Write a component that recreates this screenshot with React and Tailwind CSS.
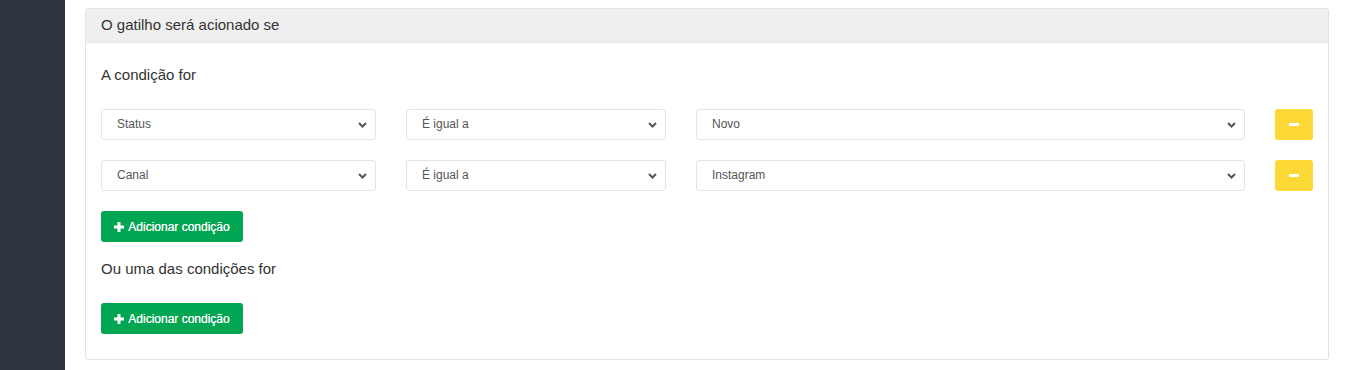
import React from 'react';

const Chevron = () => (
    <svg width="9" height="6" viewBox="0 0 9 6" className="pointer-events-none absolute right-[9px] top-1/2 -translate-y-1/2">
        <path d="M1 1 L4.5 4.5 L8 1" fill="none" stroke="#555" strokeWidth="2" />
    </svg>
);

const PlusIcon = () => (
    <svg width="10" height="10" viewBox="0 0 10 10">
        <path d="M5 0 V10 M0 5 H10" stroke="#fff" strokeWidth="3" />
    </svg>
);

// campo de seleção estilizado
function Field({ value, width }) {
    return (
        <div className={`relative ${width}`}>
            <select
                defaultValue={value}
                className="h-[31px] w-full appearance-none rounded-[3px] border border-[#e4e4e4] bg-white pl-[15px] pr-8 pb-[1px] text-[12px] text-[#555] outline-none"
            >
                <option>{value}</option>
            </select>
            <Chevron />
        </div>
    );
}

function ConditionRow({ field, op, value }) {
    return (
        <div className="flex items-center">
            <Field value={field} width="w-[275px]" />
            <div className="w-[30px]" />
            <Field value={op} width="w-[260px]" />
            <div className="w-[30px]" />
            <Field value={value} width="w-[549px]" />
            <div className="w-[30px]" />
            <button className="flex h-[31px] w-[38px] items-center justify-center rounded-[3px] bg-[#fcd937]">
                <span className="block h-[3px] w-[10px] bg-white" />
            </button>
        </div>
    );
}

function AddButton() {
    return (
        <button className="flex h-[31px] w-[142px] items-center justify-center gap-[4px] rounded-[3px] bg-[#00a651] text-[12px] text-white [text-shadow:0_0_0.4px_#fff]">
            <PlusIcon />
            <span>Adicionar condição</span>
        </button>
    );
}

export default function App() {
    return (
        <div className="flex h-[370px] w-[1347px] bg-white font-['Liberation_Sans',Arial,sans-serif]">
            {/* Sidebar */}
            <div className="w-[65px] shrink-0 bg-[#2e3440]" />

            <div className="flex-1 pl-[20px] pr-[19px] pt-[8px]">
                <div className="h-[352px] rounded-[3px] border border-[#e3e3e3]">
                    <div className="flex h-[34px] items-center border-b border-[#e6e6e6] bg-[#efefef] px-[15px] text-[15px] text-[#333]">
                        O gatilho será acionado se
                    </div>

                    <div className="px-[15px]">
                        <div className="mt-[22px] text-[15px] leading-[20px] text-[#333]">A condição for</div>

                        <div className="mt-[24px] flex flex-col gap-[20px]">
                            <ConditionRow field="Status" op="É igual a" value="Novo" />
                            <ConditionRow field="Canal" op="É igual a" value="Instagram" />
                        </div>

                        <div className="mt-[20px]">
                            <AddButton />
                        </div>

                        <div className="mt-[17px] text-[15px] leading-[20px] text-[#333]">Ou uma das condições for</div>

                        <div className="mt-[24px]">
                            <AddButton />
                        </div>
                    </div>
                </div>
            </div>
        </div>
    );
}
